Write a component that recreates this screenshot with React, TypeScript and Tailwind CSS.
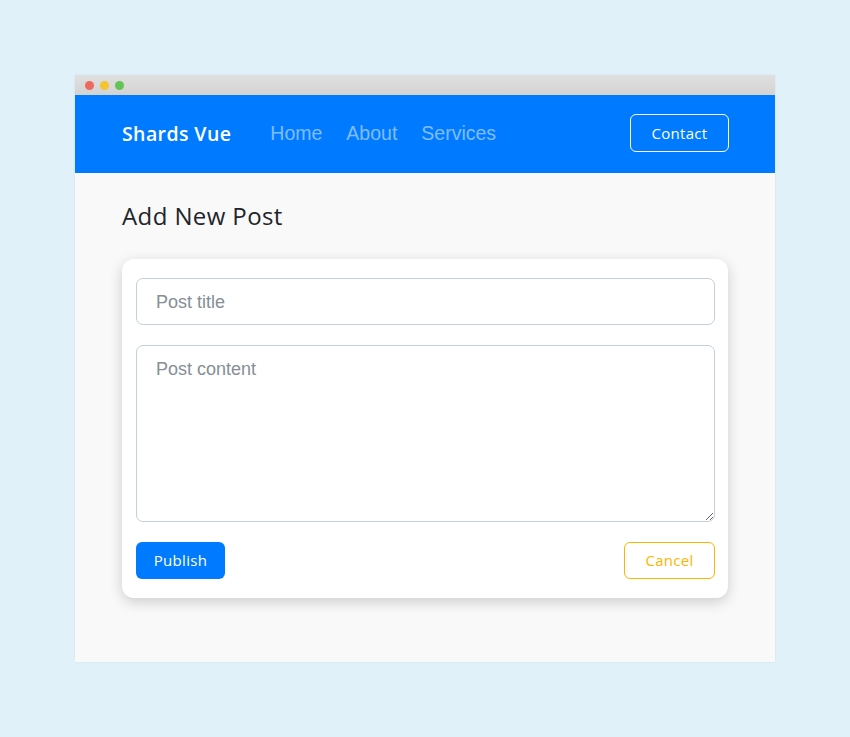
export default function App() {
  return (
    <div className="min-h-[737px] w-full bg-[#e0f1f9] pt-[75px] font-['Open_Sans',sans-serif]">
      <div className="mx-auto w-[700px] shadow-[0_0_2px_rgba(0,0,0,0.08)]">
        {/* title bar */}
        <div className="flex h-[20px] items-center gap-[6px] bg-gradient-to-b from-[#e0e0e0] to-[#d3d3d3] pl-[10px]">
          <span className="h-[9px] w-[9px] rounded-full bg-[#ec6a5e]" />
          <span className="h-[9px] w-[9px] rounded-full bg-[#f5c42f]" />
          <span className="h-[9px] w-[9px] rounded-full bg-[#61c454]" />
        </div>

        {/* navbar */}
        <nav className="flex h-[78px] items-center bg-[#007bff] pl-[47px] pr-[46px]">
          <span className="text-[19.5px] font-semibold tracking-[0.4px] text-white">Shards Vue</span>
          <div className="ml-[39px] flex gap-[24px] font-['Liberation_Sans',sans-serif] text-[19.5px] text-[#80bdff]">
            <span>Home</span>
            <span>About</span>
            <span>Services</span>
          </div>
          <button className="ml-auto -mt-[2px] h-[38px] w-[99px] rounded-[6px] border border-white text-[15px] tracking-[0.3px] text-white">
            Contact
          </button>
        </nav>

        {/* content */}
        <main className="h-[489px] bg-[#f9f9f9] px-[47px] pt-[27px]">
          <h1 className="text-[24px] leading-[32px] tracking-[0.4px] text-[#212529]">Add New Post</h1>

          <div className="mt-[27px] rounded-[12px] bg-white pb-[19px] pl-[14px] pr-[13px] pt-[19px] shadow-[0_4px_14px_rgba(0,0,0,0.18)]">
            <input
              placeholder="Post title"
              className="block h-[47px] w-full rounded-[7px] border border-[#c3cfdb] px-[19px] pt-[2px] font-['Liberation_Sans',sans-serif] text-[18px] outline-none placeholder:text-[#868e96]"
            />
            <textarea
              placeholder="Post content"
              className="mt-[20px] block h-[177px] w-full rounded-[7px] border border-[#c3cfdb] px-[19px] py-[10px] font-['Liberation_Sans',sans-serif] text-[18px] outline-none placeholder:text-[#868e96]"
            />
            <div className="mt-[20px] flex justify-between">
              <button className="h-[37px] w-[89px] rounded-[6px] bg-[#007bff] text-[15px] tracking-[0.3px] text-white">Publish</button>
              <button className="h-[37px] w-[91px] rounded-[6px] border border-[#ffb400] text-[15px] tracking-[0.3px] text-[#ffb400]">
                Cancel
              </button>
            </div>
          </div>
        </main>
      </div>
    </div>
  );
}
